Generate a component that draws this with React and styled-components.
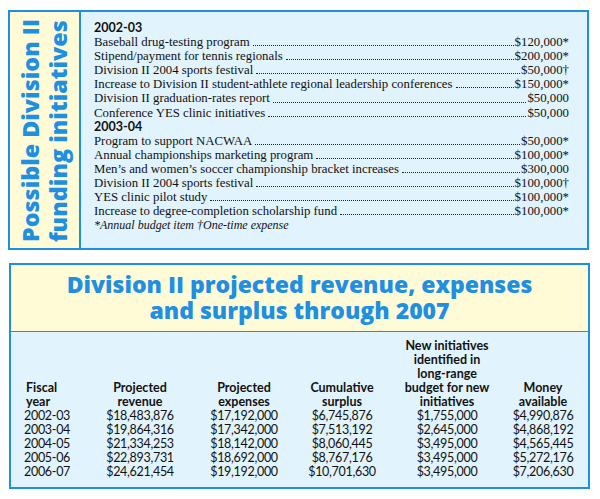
import React from "react";
import styled, { createGlobalStyle } from "styled-components";

const Global = createGlobalStyle`
  html, body { margin: 0; padding: 0; background: #ffffff; }
  body { width: 600px; height: 499px; overflow: hidden; }
`;

const BLUE = "#1f8fe2";
const YELLOW = "#fffbd6";
const SKY = "#e1f3fc";

const Page = styled.div`
  display: flex;
  flex-direction: column;
  padding: 10px 0 0 8px;
  gap: 13px;
`;

const TopPanel = styled.section`
  width: 581px;
  height: 240px;
  box-sizing: border-box;
  border: 2px solid ${BLUE};
  display: flex;
`;

const SideTitle = styled.div`
  width: 71px;
  flex: none;
  background: ${YELLOW};
  border-right: 2px solid ${BLUE};
  display: flex;
  align-items: stretch;
  justify-content: center;
  box-sizing: border-box;
  padding: 0 2px 6px 0;
`;

const Vertical = styled.h2`
  margin: 0;
  writing-mode: vertical-rl;
  transform: rotate(180deg);
  font-family: "Open Sans", "DejaVu Sans", sans-serif;
  font-weight: 800;
  font-size: 23.3px;
  line-height: 28px;
  color: ${BLUE};
  text-align: start;
  white-space: nowrap;
`;

const List = styled.div`
  flex: 1;
  background: ${SKY};
  padding: 9px 18px 0 13px;
  font-family: "Liberation Serif", "Times New Roman", serif;
  font-size: 12.8px;
  line-height: 14.1px;
  color: #111;
`;

const Year = styled.div`
  font-family: "Lato", "DejaVu Sans", sans-serif;
  font-weight: 700;
  font-size: 12.5px;
`;

const Item = styled.div`
  display: flex;
  align-items: baseline;
  white-space: nowrap;
`;

const Leader = styled.span`
  flex: 1;
  border-bottom: 1px dotted #222;
  margin: 0 1px 0 3px;
  height: 1px;
  align-self: flex-end;
  margin-bottom: 3px;
`;

const Note = styled.div`
  font-style: italic;
  font-size: 12px;
`;

const BottomPanel = styled.section`
  width: 581px;
  height: 226px;
  margin-left: 1px;
  box-sizing: border-box;
  border: 2px solid ${BLUE};
  display: flex;
  flex-direction: column;
`;

const Header = styled.div`
  height: 67px;
  flex: none;
  background: ${YELLOW};
  border-bottom: 1px solid ${BLUE};
  box-sizing: border-box;
  padding-top: 6px;
`;

const Title = styled.h1`
  margin: 0;
  text-align: center;
  font-family: "Open Sans", "DejaVu Sans", sans-serif;
  font-weight: 800;
  font-size: 23px;
  line-height: 26px;
  color: ${BLUE};
`;

const TableArea = styled.div`
  flex: 1;
  background: ${SKY};
  display: grid;
  grid-template-columns: 65px 104px 104px 92px 118px 74px;
  align-content: end;
  padding: 0 0 8px 12px;
  font-family: "Lato", "DejaVu Sans", sans-serif;
  font-size: 12.5px;
  line-height: 14px;
  color: #111;
`;

const Cell = styled.div`
  text-align: ${(p) => (p.$left ? "left" : "center")};
  padding-left: ${(p) => (p.$left ? "1px" : "0")};
  letter-spacing: -0.3px;
`;

const HeadCell = styled(Cell)`
  font-weight: 700;
  align-self: end;
  letter-spacing: 0;
  padding-left: ${(p) => (p.$left ? "3px" : "0")};
`;

const items0203 = [
  ["Baseball drug-testing program", "$120,000*"],
  ["Stipend/payment for tennis regionals", "$200,000*"],
  ["Division II 2004 sports festival", "$50,000\u2020"],
  ["Increase to Division II student-athlete regional leadership conferences", "$150,000*"],
  ["Division II graduation-rates report", "$50,000"],
  ["Conference YES clinic initiatives", "$50,000"],
];

const items0304 = [
  ["Program to support NACWAA", "$50,000*"],
  ["Annual championships marketing program", "$100,000*"],
  ["Men\u2019s and women\u2019s soccer championship bracket increases", "$300,000"],
  ["Division II 2004 sports festival", "$100,000\u2020"],
  ["YES clinic pilot study", "$100,000*"],
  ["Increase to degree-completion scholarship fund", "$100,000*"],
];

const headers = [
  ["Fiscal", "year"],
  ["Projected", "revenue"],
  ["Projected", "expenses"],
  ["Cumulative", "surplus"],
  ["New initiatives", "identified in", "long-range", "budget for new", "initiatives"],
  ["Money", "available"],
];

const rows = [
  ["2002-03", "$18,483,876", "$17,192,000", "$6,745,876", "$1,755,000", "$4,990,876"],
  ["2003-04", "$19,864,316", "$17,342,000", "$7,513,192", "$2,645,000", "$4,868,192"],
  ["2004-05", "$21,334,253", "$18,142,000", "$8,060,445", "$3,495,000", "$4,565,445"],
  ["2005-06", "$22,893,731", "$18,692,000", "$8,767,176", "$3,495,000", "$5,272,176"],
  ["2006-07", "$24,621,454", "$19,192,000", "$10,701,630", "$3,495,000", "$7,206,630"],
];

const Lines = ({ list }) =>
  list.map(([label, amount], i) => (
    <Item key={i}>
      <span>{label}</span>
      <Leader />
      <span>{amount}</span>
    </Item>
  ));

export default function App() {
  return (
    <>
      <Global />
      <Page>
        <TopPanel>
          <SideTitle>
            <Vertical>
              Possible Division II
              <br />
              funding initiatives
            </Vertical>
          </SideTitle>
          <List>
            <Year>2002-03</Year>
            <Lines list={items0203} />
            <Year>2003-04</Year>
            <Lines list={items0304} />
            <Note>*Annual budget item †One-time expense</Note>
          </List>
        </TopPanel>
        <BottomPanel>
          <Header>
            <Title>
              Division II projected revenue, expenses
              <br />
              and surplus through 2007
            </Title>
          </Header>
          <TableArea>
            {headers.map((h, i) => (
              <HeadCell key={i} $left={i === 0}>
                {h.map((l, j) => (
                  <div key={j}>{l}</div>
                ))}
              </HeadCell>
            ))}
            {rows.map((r, ri) =>
              r.map((c, ci) => (
                <Cell key={ri + "-" + ci} $left={ci === 0}>
                  {c}
                </Cell>
              ))
            )}
          </TableArea>
        </BottomPanel>
      </Page>
    </>
  );
}
